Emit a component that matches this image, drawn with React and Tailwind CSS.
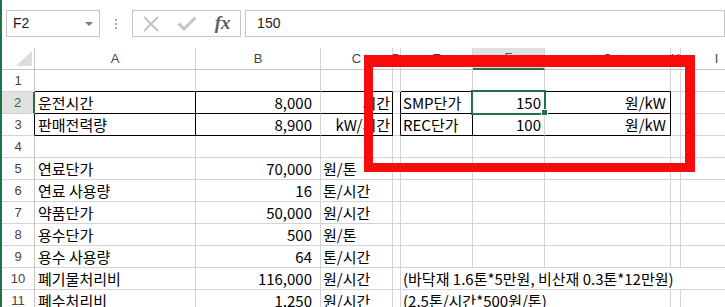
import React from "react";

const G = "#217346";

function Cell({ text, right = false, pad = "pl-[2px]", rb = "border-r-[#d4d4d4]", bb = "border-b-[#d4d4d4]", span = "" }) {
  return (
    <div
      className={`relative flex items-center border-r border-b ${rb} ${bb} ${span} ${right ? "justify-end" : "justify-start"} ${pad} whitespace-nowrap overflow-visible min-w-0 text-[15px] leading-none text-black font-['Noto_Sans_CJK_KR','Noto_Sans',sans-serif]`}
    >
      {text}
    </div>
  );
}

function RowHead({ n, sel = false, blackRight = false }) {
  if (sel) {
    return (
      <div className="flex items-center justify-center border-b border-b-[#d4d4d4] border-r-2 border-r-[#217346] bg-[#e1e1e1] text-[13px] text-[#217346] font-['Liberation_Sans',sans-serif]">
        {n}
      </div>
    );
  }
  return (
    <div
      className={`flex items-center justify-center border-b border-b-[#d4d4d4] border-r ${blackRight ? "border-r-black" : "border-r-[#c6c6c6]"} text-[13px] text-[#444] font-['Liberation_Sans',sans-serif]`}
    >
      {n}
    </div>
  );
}

function ColHead({ l, sel = false }) {
  if (sel) {
    return (
      <div className="flex items-center justify-center border-r border-r-[#d4d4d4] border-b-2 border-b-[#217346] bg-[#e1e1e1] text-[13px] text-[#217346] font-['Liberation_Sans',sans-serif]">
        {l}
      </div>
    );
  }
  return (
    <div className="flex items-center justify-center border-r border-r-[#d4d4d4] border-b border-b-[#c6c6c6] text-[13px] text-[#444] font-['Liberation_Sans',sans-serif] overflow-visible whitespace-nowrap">
      {l}
    </div>
  );
}

const BL = "border-r-black";
const BB = "border-b-black";

function StdRow({ n, a, b, c }) {
  return (
    <>
      <RowHead n={n} />
      <Cell text={a} pad="pl-[3px]" />
      <Cell text={b} right pad="pr-[8px]" />
      <Cell text={c} pad="pl-[2px]" />
      <Cell />
      <Cell />
      <Cell />
      <Cell />
      <Cell />
      <Cell />
    </>
  );
}

export default function App() {
  return (
    <div className="relative w-[725px] h-[307px] overflow-hidden bg-white border-l-2 border-l-[#217346]">
      {/* formula bar */}
      <div className="h-[48px] pt-[10px] flex items-start">
        <div className="ml-[4px] w-[101px] h-[27px] border border-[#c6c6c6] flex items-center justify-between pl-[6px] pr-[6px] text-[14px] text-[#222] font-['Liberation_Sans',sans-serif]">
          <span>F2</span>
          <svg width="8" height="4" viewBox="0 0 8 4">
            <polygon points="0,0 8,0 4,4" fill="#7a7a7a" />
          </svg>
        </div>
        <div className="ml-[15px] w-[2px] h-[27px] flex flex-col items-center justify-center gap-[2px]">
          <div className="w-[2px] h-[2px] bg-[#a6a6a6]" />
          <div className="w-[2px] h-[2px] bg-[#a6a6a6]" />
          <div className="w-[2px] h-[2px] bg-[#a6a6a6]" />
        </div>
        <div className="ml-[15px] w-[109px] h-[27px] border border-[#c6c6c6] flex items-center">
          <div className="w-[36px] flex justify-center">
            <svg width="16" height="16" viewBox="0 0 16 16">
              <path d="M1 1 L15 15 M15 1 L1 15" stroke="#c4c4c4" strokeWidth="2" fill="none" />
            </svg>
          </div>
          <div className="w-[36px] flex justify-center">
            <svg width="20" height="15" viewBox="0 0 20 15">
              <path d="M1.5 7.5 L7 13 L18.5 1.5" stroke="#c4c4c4" strokeWidth="3" fill="none" />
            </svg>
          </div>
          <div className="w-[35px] flex justify-center text-[19px] leading-none italic font-bold text-[#5f5f5f] font-['Liberation_Serif',serif] pb-[2px]">
            fx
          </div>
        </div>
        <div className="ml-[4px] w-[520px] h-[27px] border border-[#c6c6c6] flex items-center pl-[11px] text-[14px] text-[#222] font-['Liberation_Sans',sans-serif]">
          150
        </div>
      </div>

      {/* grid */}
      <div className="grid w-[751px] grid-cols-[33px_161px_125px_72px_8px_72px_72px_126px_10px_72px] auto-rows-[22px]">
        {/* header */}
        <div className="relative border-r border-r-[#c6c6c6] border-b border-b-[#c6c6c6]">
          <svg className="absolute right-[2px] bottom-[3px]" width="16" height="15" viewBox="0 0 16 15">
            <polygon points="16,0 16,15 0,15" fill="#dcdcdc" />
          </svg>
        </div>
        <ColHead l="A" />
        <ColHead l="B" />
        <ColHead l="C" />
        <ColHead l="D" />
        <ColHead l="E" />
        <ColHead l="F" sel />
        <ColHead l="G" />
        <ColHead l="H" />
        <ColHead l="I" />

        {/* row 1 */}
        <RowHead n={1} />
        <Cell bb={BB} />
        <Cell bb={BB} />
        <Cell bb={BB} />
        <Cell />
        <Cell bb={BB} />
        <Cell bb={BB} />
        <Cell bb={BB} />
        <Cell />
        <Cell />

        {/* row 2 */}
        <RowHead n={2} sel />
        <Cell text="운전시간" pad="pl-[3px]" rb={BL} bb={BB} />
        <Cell text="8,000" right pad="pr-[8px]" bb={BB} />
        <Cell text="시간" right pad="pr-[2px]" rb={BL} bb={BB} />
        <Cell rb={BL} />
        <Cell text="SMP단가" pad="pl-[2px]" rb={BL} bb={BB} />
        <Cell text="150" right pad="pr-[3px]" bb={BB} />
        <Cell text="원/kW" right pad="pr-[4px]" rb={BL} bb={BB} />
        <Cell />
        <Cell />

        {/* row 3 */}
        <RowHead n={3} blackRight />
        <Cell text="판매전력량" pad="pl-[3px]" rb={BL} bb={BB} />
        <Cell text="8,900" right pad="pr-[8px]" bb={BB} />
        <Cell text="kW/시간" right pad="pr-[2px]" rb={BL} bb={BB} />
        <Cell rb={BL} />
        <Cell text="REC단가" pad="pl-[2px]" rb={BL} bb={BB} />
        <Cell text="100" right pad="pr-[3px]" bb={BB} />
        <Cell text="원/kW" right pad="pr-[4px]" rb={BL} bb={BB} />
        <Cell />
        <Cell />

        {/* row 4 */}
        <StdRow n={4} />
        <StdRow n={5} a="연료단가" b="70,000" c="원/톤" />
        <StdRow n={6} a="연료 사용량" b="16" c="톤/시간" />
        <StdRow n={7} a="약품단가" b="50,000" c="원/시간" />
        <StdRow n={8} a="용수단가" b="500" c="원/톤" />
        <StdRow n={9} a="용수 사용량" b="64" c="톤/시간" />

        {/* row 10 */}
        <RowHead n={10} />
        <Cell text="폐기물처리비" pad="pl-[3px]" />
        <Cell text="116,000" right pad="pr-[8px]" />
        <Cell text="원/시간" pad="pl-[2px]" />
        <Cell />
        <Cell text="(바닥재 1.6톤*5만원, 비산재 0.3톤*12만원)" pad="pl-[2px]" span="col-span-5" />

        {/* row 11 */}
        <RowHead n={11} />
        <Cell text="폐수처리비" pad="pl-[3px]" />
        <Cell text="1,250" right pad="pr-[8px]" />
        <Cell text="원/시간" pad="pl-[2px]" />
        <Cell />
        <Cell text="(2.5톤/시간*500원/톤)" pad="pl-[2px]" span="col-span-3" />
        <Cell />
        <Cell />
      </div>

      {/* selection */}
      <div className="absolute left-[469px] top-[90px] w-[75px] h-[25px] border-2 border-[#217346]" />
      <div className="absolute left-[540px] top-[110px] w-[5px] h-[5px] bg-[#217346] outline outline-1 outline-white" />

      {/* red annotation rectangle */}
      <div className="absolute left-[362px] top-[55px] w-[331px] h-[117px] border-t-[12px] border-l-[9px] border-r-[10px] border-b-[9px] border-[#f80b0b]" />
    </div>
  );
}
